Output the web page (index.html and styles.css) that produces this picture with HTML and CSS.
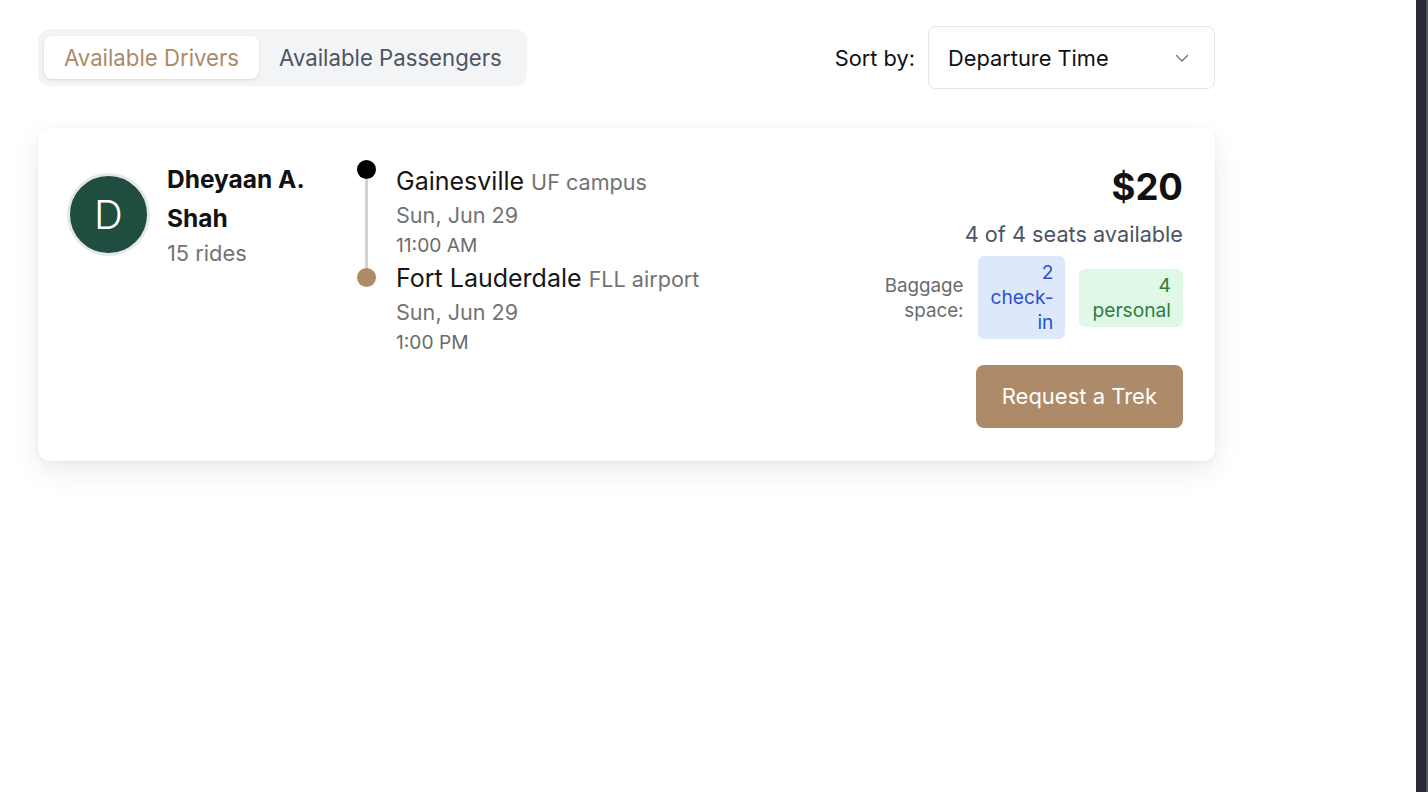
FILE: index.html
```html
<!DOCTYPE html>
<html lang="en">
<head>
<meta charset="utf-8">
<title>Available Drivers</title>
<link rel="stylesheet" href="styles.css">
</head>
<body>
<main class="page">
  <div class="content">
    <div class="toolbar">
      <div class="tabs">
        <button class="tab tab-active">Available Drivers</button>
        <button class="tab">Available Passengers</button>
      </div>
      <div class="sort">
        <span class="sort-label">Sort by:</span>
        <div class="select">
          <span>Departure Time</span>
          <svg class="chevron" width="18" height="18" viewBox="0 0 18 18" fill="none"><path d="M3.5 6.5l5.5 5.5 5.5-5.5" stroke="#6b7280" stroke-width="1.4" stroke-linecap="round" stroke-linejoin="round"/></svg>
        </div>
      </div>
    </div>

    <section class="card">
      <div class="driver">
        <div class="avatar">D</div>
        <div class="driver-info">
          <div class="driver-name">Dheyaan A. Shah</div>
          <div class="driver-rides">15 rides</div>
        </div>
      </div>

      <div class="route">
        <div class="markers">
          <span class="dot dot-start"></span>
          <span class="line"></span>
          <span class="dot dot-end"></span>
        </div>
        <div class="stops">
          <div class="stop">
            <div class="stop-title">Gainesville <span class="stop-sub">UF campus</span></div>
            <div class="stop-date">Sun, Jun 29</div>
            <div class="stop-time">11:00 AM</div>
          </div>
          <div class="stop">
            <div class="stop-title">Fort Lauderdale <span class="stop-sub">FLL airport</span></div>
            <div class="stop-date">Sun, Jun 29</div>
            <div class="stop-time">1:00 PM</div>
          </div>
        </div>
      </div>

      <div class="offer">
        <div class="price">$20</div>
        <div class="seats">4 of 4 seats available</div>
        <div class="baggage">
          <span class="baggage-label">Baggage space:</span>
          <span class="badge badge-blue">2 check-in</span>
          <span class="badge badge-green">4 personal</span>
        </div>
        <button class="request">Request a Trek</button>
      </div>
    </section>
  </div>
</main>
<div class="edge"></div>
</body>
</html>
```

FILE: styles.css
```css
* { box-sizing: border-box; }

html, body {
  margin: 0;
  padding: 0;
  height: 100%;
}

body {
  display: flex;
  background: #ffffff;
  font-family: Inter, "Noto Sans", "Liberation Sans", sans-serif;
  color: #111111;
}

.page {
  flex: 1;
  padding: 26px 0 0 38px;
}

.content {
  width: 1177px;
}

.edge {
  width: 12px;
  background: #272a36;
  border-right: 2px solid #4f525b;
}

/* toolbar */
.toolbar {
  display: flex;
  align-items: center;
  justify-content: space-between;
}

.tabs {
  display: flex;
  background: #f3f4f6;
  border-radius: 12px;
  padding: 7px 5px 7px 6px;
}

.tab {
  border: none;
  background: transparent;
  font-family: inherit;
  font-size: 22.2px;
  line-height: 43px;
  height: 43px;
  padding: 0 20px;
  color: #4b5563;
  border-radius: 8px;
}

.tab-active {
  background: #ffffff;
  color: #ad8b67;
  box-shadow: 0 1px 3px rgba(0, 0, 0, 0.12);
}

.sort {
  display: flex;
  align-items: center;
  gap: 13px;
}

.sort-label {
  font-size: 21.8px;
  color: #111111;
}

.select {
  width: 287px;
  height: 63px;
  border: 1px solid #e5e7eb;
  border-radius: 8px;
  display: flex;
  align-items: center;
  justify-content: space-between;
  padding: 0 23px 0 19px;
  font-size: 21.8px;
  color: #111111;
}

/* card */
.card {
  margin-top: 39px;
  background: #ffffff;
  border-radius: 12px;
  box-shadow: 0 10px 28px rgba(0, 0, 0, 0.08), 0 2px 6px rgba(0, 0, 0, 0.04);
  padding: 32px 32px 33px 29px;
  display: flex;
  align-items: flex-start;
}

.driver {
  display: flex;
  align-items: center;
  gap: 17px;
}

.avatar {
  width: 83px;
  height: 83px;
  border-radius: 50%;
  background: #1f4d3f;
  border: 3px solid #e5e7eb;
  color: #ffffff;
  font-size: 40px;
  font-weight: 300;
  display: flex;
  align-items: center;
  justify-content: center;
}

.driver-info {
  width: 160px;
}

.driver-name {
  font-size: 24.5px;
  font-weight: 700;
  line-height: 39px;
  color: #111111;
}

.driver-rides {
  font-size: 21.8px;
  line-height: 30px;
  color: #737373;
}

/* route */
.route {
  display: flex;
  gap: 20px;
  margin-left: 30px;
}

.markers {
  display: flex;
  flex-direction: column;
  align-items: center;
  width: 19px;
}

.dot {
  width: 19px;
  height: 19px;
  border-radius: 50%;
}

.dot-start { background: #000000; }
.dot-end { background: #ad8b67; }

.line {
  width: 3px;
  height: 89px;
  background: #d1d1d1;
}

.stops {
  padding-top: 3px;
}

.stop-title {
  font-size: 25px;
  line-height: 36px;
  color: #161616;
}

.stop-sub {
  font-size: 21.6px;
  color: #737373;
}

.stop-date {
  font-size: 21.6px;
  line-height: 30px;
  color: #737373;
}

.stop-time {
  font-size: 19.2px;
  line-height: 30px;
  color: #6b6b6b;
}

/* offer */
.offer {
  margin-left: auto;
  display: flex;
  flex-direction: column;
  align-items: flex-end;
}

.price {
  margin-top: 5px;
  font-size: 36.5px;
  font-weight: 700;
  line-height: 45px;
  color: #111111;
}

.seats {
  margin-top: 9px;
  font-size: 21.7px;
  line-height: 30px;
  color: #4b5563;
}

.baggage {
  margin-top: 7px;
  display: flex;
  align-items: center;
  gap: 14px;
}

.baggage-label {
  width: min-content;
  text-align: right;
  font-size: 18.8px;
  line-height: 25px;
  color: #6b6b6b;
}

.badge {
  width: min-content;
  text-align: right;
  font-size: 19.2px;
  line-height: 25px;
  padding: 4px 12px 4px 13px;
  border-radius: 6px;
}

.badge-blue {
  background: #dde8fb;
  color: #2d4fd0;
}

.badge-green {
  background: #e0f8e6;
  color: #2f7d3f;
}

.request {
  margin-top: 26px;
  border: none;
  border-radius: 8px;
  background: #ad8b69;
  color: #ffffff;
  font-family: inherit;
  font-size: 22px;
  line-height: 31px;
  padding: 16px 26px;
}
```
